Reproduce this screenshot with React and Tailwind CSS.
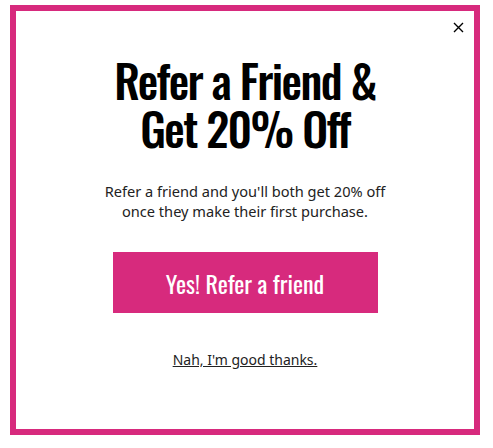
export default function App() {
    return (
        <div className="w-[493px] h-[448px] bg-white pt-[5px] pl-[10px]">
            <div className="relative w-[470px] h-[430px] border-[6px] border-[#d72a7d] bg-white flex flex-col items-center">
                {/* Close button */}
                <button className="absolute top-[9px] right-[9px] w-[14px] h-[14px] flex items-center justify-center text-black">
                    <svg width="11" height="11" viewBox="0 0 11 11" fill="none" stroke="currentColor" strokeWidth="1.4">
                        <path d="M1 1L10 10M10 1L1 10" />
                    </svg>
                </button>

                <h1 className="mt-[44px] text-center font-medium text-black text-[46px] leading-[48px] tracking-[-1.6px] [font-family:Oswald,'DejaVu_Sans_Condensed','Liberation_Sans_Narrow','Roboto',sans-serif]">
                    Refer a Friend &amp;<br />Get 20% Off
                </h1>

                <p className="mt-[30px] text-center text-[14.6px] leading-[20px] text-[#222] [font-family:'Noto_Sans',sans-serif]">
                    Refer a friend and you'll both get 20% off<br />once they make their first purchase.
                </p>

                <button className="mt-[31px] w-[265px] h-[61px] bg-[#d72a7d] text-white text-[24px] [font-family:Oswald,'DejaVu_Sans_Condensed','Liberation_Sans_Narrow','Roboto',sans-serif]">
                    Yes! Refer a friend
                </button>

                <a href="#" className="mt-[37px] text-[14px] leading-[20px] text-[#222] underline [font-family:'Noto_Sans',sans-serif]">
                    Nah, I'm good thanks.
                </a>
            </div>
        </div>
    )
}
